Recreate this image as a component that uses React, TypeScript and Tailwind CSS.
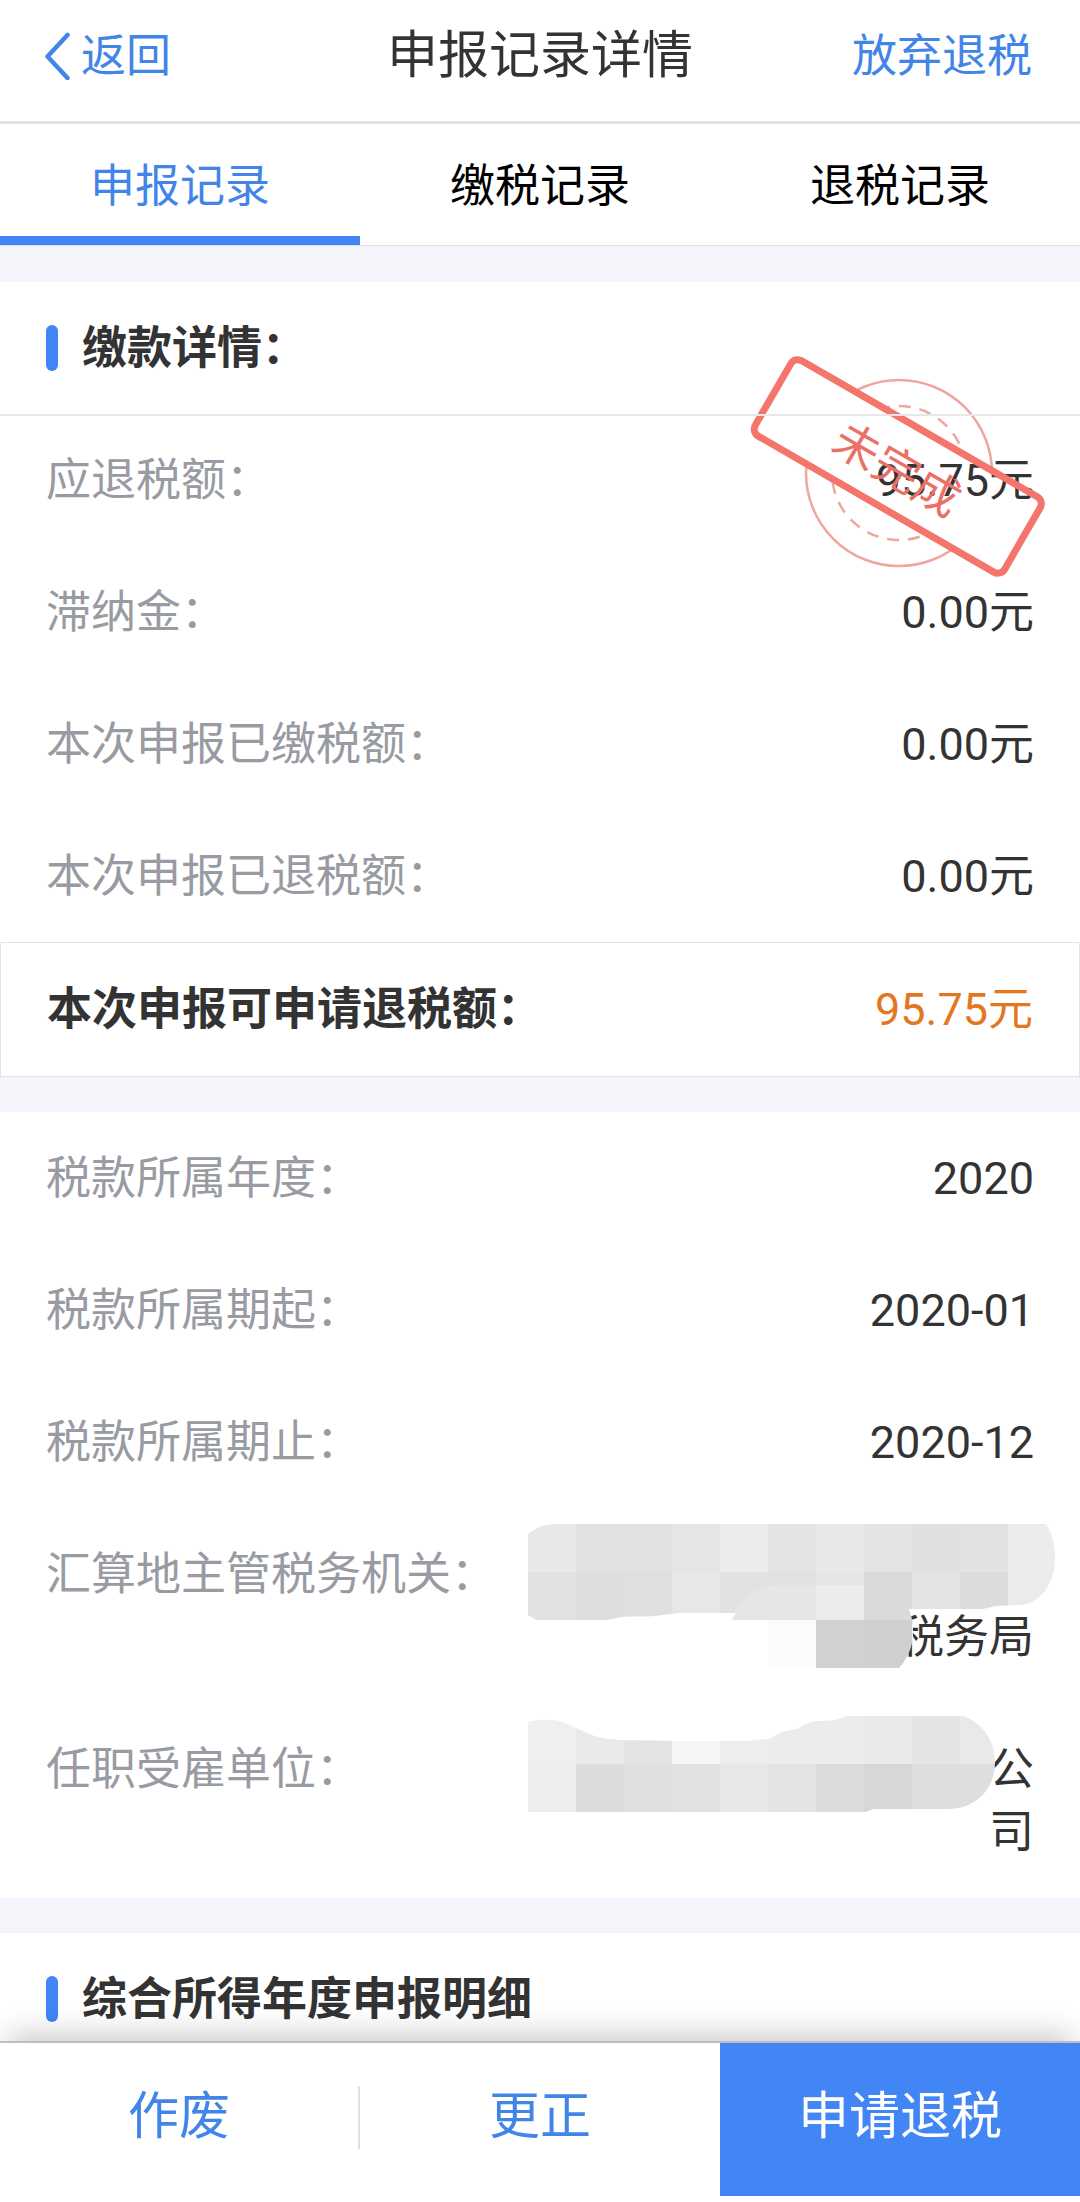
import { useState } from "react";

type Item = { label: string; value: string };

const TABS = ["申报记录", "缴税记录", "退税记录"];

const AMOUNTS: Item[] = [
  { label: "应退税额：", value: "95.75元" },
  { label: "滞纳金：", value: "0.00元" },
  { label: "本次申报已缴税额：", value: "0.00元" },
  { label: "本次申报已退税额：", value: "0.00元" },
];

const PERIODS: Item[] = [
  { label: "税款所属年度：", value: "2020" },
  { label: "税款所属期起：", value: "2020-01" },
  { label: "税款所属期止：", value: "2020-12" },
];

// 48px cells, one string per line of the mosaic, two hex digits per grey
const OFFICE_CELLS = [
  "e8 e1 e1 e5 ec e3 e8 e3 e0 e2 ec",
  "e2 de df e7 e2 e1 e6 da e4 dc eb",
  "ff ff ff ff ff fb d1 cf ff ff ff",
];
const OFFICE_SHAPE =
  "M0 10 C8 4 16 0 28 0 H518 C524 9 527 20 527 33 C527 60 512 81 490 81 L469 82 C464 82 459 85 453 85 H381 C384 92 385 100 385 109 C385 122 380 134 371 144 H240 V96 H204 L208 89 H157 C146 89 138 91 127 92 C116 93 104 92 94 93 L79 96 H8 L0 91 Z";

const EMPLOYER_CELLS = [
  "ef ea e3 f5 ed ec ec ea e4 e9 ff",
  "ee dc df e2 e8 e3 db d7 de de ff",
];
const EMPLOYER_SHAPE =
  "M0 6 C12 3 26 3 35 6 L48 12 C56 15 66 21 75 22 C90 25 110 24 150 25 H220 C230 24 238 24 243 22 C250 17 258 14 270 13 C278 7 282 6 290 5 C304 5 310 4 318 0 H436 C455 8 467 24 467 46 C467 73 448 93 420 93 H345 L338 96 H0 Z";

const Mosaic: React.FC<{
  id: string;
  cells: string[];
  shape: string;
  className: string;
  children?: React.ReactNode;
}> = ({ id, cells, shape, className, children }) => (
  <svg
    aria-hidden="true"
    width={528}
    height={cells.length * 48}
    className={"absolute max-w-none " + className}
  >
    <clipPath id={id}>
      <path d={shape} />
    </clipPath>
    <g clipPath={`url(#${id})`}>
      {cells.map((line, y) =>
        line
          .split(" ")
          .map((c, x) => (
            <rect
              key={x + "-" + y}
              x={x * 48}
              y={y * 48}
              width={48}
              height={48}
              fill={"#" + c + c + c}
            />
          )),
      )}
      {children}
    </g>
  </svg>
);

const Stamp: React.FC = () => (
  <svg
    width={300}
    height={230}
    viewBox="748 352 300 230"
    className="absolute right-8 top-[70px]"
  >
    <mask id="outside" maskUnits="userSpaceOnUse" x="748" y="352" width="300" height="230">
      <rect x="748" y="352" width="300" height="230" fill="#fff" />
      <rect
        x="754"
        y="423"
        width="288"
        height="87"
        rx="8"
        fill="#000"
        transform="rotate(30 898 466)"
      />
    </mask>
    <g mask="url(#outside)" fill="none" stroke="#f0a59f" strokeWidth="2.5">
      <circle cx="899" cy="473" r="93" />
      <circle cx="899" cy="473" r="67" strokeDasharray="12 9" />
    </g>
    <g transform="rotate(30 898 466)">
      <rect
        x="754"
        y="423"
        width="288"
        height="87"
        rx="8"
        fill="none"
        stroke="#f4756b"
        strokeWidth="7"
      />
      <text x="899" y="486" textAnchor="middle" fontSize="46" fill="#ea7068">
        未完成
      </text>
    </g>
  </svg>
);

const SectionTitle: React.FC<{ children: React.ReactNode }> = ({ children }) => (
  <div className="flex h-[132px] items-center gap-6 px-[46px]">
    <span className="h-[46px] w-3 rounded-full bg-[#4285f4]" />
    <h2 className="text-[45px] leading-[63px] font-bold">{children}</h2>
  </div>
);

const Row: React.FC<{ label: string; children: React.ReactNode }> = ({
  label,
  children,
}) => (
  <div className="flex justify-between px-[46px] pt-[35px] pb-[34px]">
    <dt className="text-[#999ba3]">{label}</dt>
    <dd className="relative text-right">{children}</dd>
  </div>
);

const App: React.FC = () => {
  const [tab, setTab] = useState(0);

  return (
    <div className="min-h-screen bg-[#f4f5fa] pb-[137px] text-[45px] leading-[63px] text-[#333] [font-family:Roboto,'Noto_Sans_CJK_SC',sans-serif]">
      <header className="grid grid-cols-[1fr_auto_1fr] items-center border-b-[3px] border-[#e2e2e2] bg-white pr-12 pl-11 pt-5 pb-[29px]">
        <button className="flex items-center gap-[11px] justify-self-start text-[#4285e8]">
          <svg
            width="26"
            height="48"
            viewBox="0 0 26 48"
            fill="none"
            stroke="currentColor"
            strokeWidth="4.5"
            strokeLinecap="round"
            strokeLinejoin="round"
          >
            <path d="M23.5 3 L3.5 24.5 L23.5 46" />
          </svg>
          返回
        </button>
        <h1 className="pl-1 text-[51px] leading-[72px]">申报记录详情</h1>
        <button className="justify-self-end text-[#4285e8]">放弃退税</button>
      </header>

      <nav className="grid grid-cols-3 border-b border-[#e0e1e4] bg-white">
        {TABS.map((x, i) => (
          <button
            key={x}
            onClick={() => setTab(i)}
            className={
              (tab === i
                ? "border-[#4285f4] text-[#4285e8]"
                : "border-transparent text-black") +
              " border-b-[9px] pt-[31px] pb-[18px]"
            }
          >
            {x}
          </button>
        ))}
      </nav>

      <main>
        <section className="relative mt-9 bg-white">
          <SectionTitle>缴款详情：</SectionTitle>
          <dl>
            {AMOUNTS.map((x) => (
              <Row key={x.label} label={x.label}>
                {x.value}
              </Row>
            ))}
            <div className="flex justify-between border border-[#e2e4e8] px-[46px] py-[35px]">
              <dt className="font-bold">本次申报可申请退税额：</dt>
              <dd className="text-[#e2771f]">95.75元</dd>
            </div>
          </dl>
          <Stamp />
          {/* the divider runs over the stamp */}
          <div className="absolute inset-x-0 top-[132px] h-[2px] bg-[#e6e7e9]" />
        </section>

        <section className="mt-[35px] bg-white">
          <dl>
            {PERIODS.map((x) => (
              <Row key={x.label} label={x.label}>
                {x.value}
              </Row>
            ))}
            <Row label="汇算地主管税务机关：">
              <br />
              税务局
              <Mosaic
                id="office"
                cells={OFFICE_CELLS}
                shape={OFFICE_SHAPE}
                className="-top-[19px] -right-[22px]"
              >
                <path d="M204 96 C210 74 226 61 252 61 H288 V96 Z" fill="#e6e6e6" />
                <path d="M288 61 H336 V96 H288 Z" fill="#ececec" />
              </Mosaic>
            </Row>
            <Row label="任职受雇单位：">
              公<br />司
              <Mosaic
                id="employer"
                cells={EMPLOYER_CELLS}
                shape={EMPLOYER_SHAPE}
                className="-top-[22px] -right-[22px]"
              />
            </Row>
          </dl>
        </section>

        <section className="mt-[35px] bg-white">
          <SectionTitle>综合所得年度申报明细</SectionTitle>
        </section>
      </main>

      <footer className="fixed inset-x-0 bottom-0 border-t-2 border-[#bdbfc2] bg-white pb-[6px] text-[51px] leading-[72px] shadow-[0_-14px_28px_-8px_rgba(0,0,0,0.22)]">
        <div className="grid grid-cols-3">
          <button className="flex items-center pt-[38px] pb-[43px] text-[#4285e8]">
            <span className="flex-1">作废</span>
            <span className="h-[63px] w-[2px] bg-[#dfe0e2]" />
          </button>
          <button className="pt-[38px] pb-[43px] text-[#4285e8]">更正</button>
          <button className="bg-[#4285f4] pt-[38px] pb-[43px] text-white">申请退税</button>
        </div>
      </footer>
    </div>
  );
};

export default App;
